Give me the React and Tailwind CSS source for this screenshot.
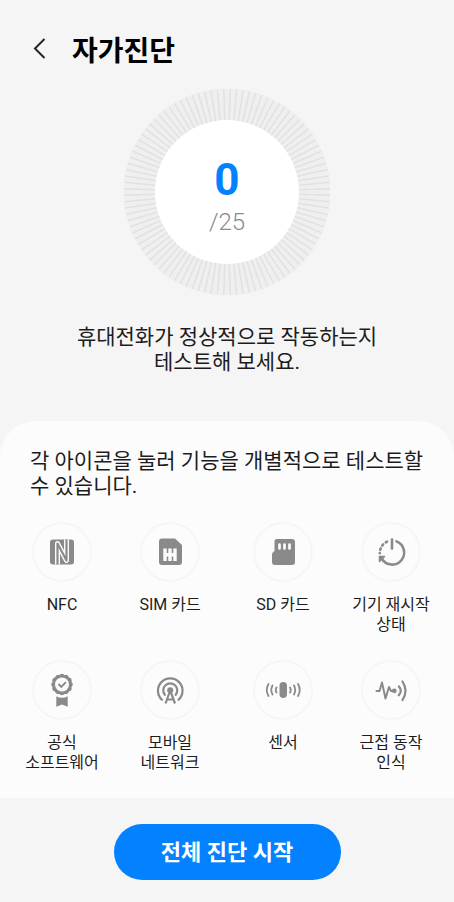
import React from 'react';

const TICK_COUNT = 100;
const SCALLOP_COUNT = 12;

const NfcIcon = () => (
  <svg viewBox="0 0 32 32" className="size-8" fill="none" strokeLinejoin="round" aria-hidden="true">
    <rect x="4" y="3.500" width="24" height="25" rx="3" fill="#8a8a8a" />
    <path d="M11.500 28.500V7.500L20.500 24.500V3.500" stroke="#fcfcfc" strokeWidth="5" />
    <path d="M11.500 28.500V7.500L20.500 24.500V3.500" stroke="#8a8a8a" strokeWidth="2.200" />
  </svg>
);

const SimIcon = () => (
  <svg viewBox="0 0 32 32" className="size-8" aria-hidden="true">
    <path d="M8 2.500H21L28 9V26a3 3 0 0 1-3 3H8a3 3 0 0 1-3-3V5.500A3 3 0 0 1 8 2.500z" fill="#8a8a8a" />
    <path d="M11 12.500v12.500M16 12.500v12.500M21 12.500v12.500M11 18.800h10" stroke="#fcfcfc" strokeWidth="3.400" fill="none" />
  </svg>
);

const SdIcon = () => (
  <svg viewBox="0 0 32 32" className="size-8" aria-hidden="true">
    <path d="M10 3H25a3 3 0 0 1 3 3V26a3 3 0 0 1-3 3H8a3 3 0 0 1-3-3V18.500a3 3 0 0 1 1-2.200l1.500-1.300V5.500A2.500 2.500 0 0 1 10 3z" fill="#8a8a8a" />
    <path d="M12.500 8.500v4M17.500 8.500v4M22.500 8.500v4" stroke="#fcfcfc" strokeWidth="2.700" strokeLinecap="round" />
  </svg>
);

const RestartIcon = () => (
  <svg viewBox="0 0 32 32" className="size-8" fill="none" stroke="#8a8a8a" strokeWidth="2.600" strokeLinecap="round" strokeLinejoin="round" aria-hidden="true">
    <path d="M17 3.500V12.500" />
    <path d="M21.500 5.400A12 12 0 1 1 7 23" />
    <path d="M12 5.600L10.800 6.300M8.100 8.500L7.200 9.600M5.700 12.400L5.200 13.800M4.800 17V17.200" />
    <path d="M4.500 20.500H9.500L4.500 25.500z" fill="#8a8a8a" strokeWidth="1.500" />
  </svg>
);

const SoftwareIcon = () => (
  <svg viewBox="0 0 32 36" className="h-9 w-8" fill="#8a8a8a" aria-hidden="true">
    {Array.from({ length: SCALLOP_COUNT }, (_, i) => (
      <circle key={i} cx="16" cy="4" r="2.300" transform={`rotate(${i * (360 / SCALLOP_COUNT)} 16 12.500)`} />
    ))}
    <circle cx="16" cy="12.500" r="10" />
    <circle cx="16" cy="12.500" r="7" fill="#fcfcfc" />
    <path d="M12.500 12l2.800 2.800 4.600-4.600" fill="none" stroke="#8a8a8a" strokeWidth="1.900" />
    <path d="M10.300 24.300q2.800 2 5.700 1.200 2.900.8 5.700-1.200V34.800L16 32.500l-5.700 2.300z" />
  </svg>
);

const NetworkIcon = () => (
  <svg viewBox="0 0 32 32" className="size-8" fill="none" stroke="#8a8a8a" strokeWidth="2.200" aria-hidden="true">
    <path d="M8 25.800A12.300 12.300 0 1 1 24.500 25.800" strokeLinecap="round" />
    <path d="M10.800 20.800A7 7 0 1 1 21.700 20.800" strokeLinecap="round" />
    <circle cx="16.200" cy="16.200" r="3" fill="#8a8a8a" stroke="none" />
    <path d="M16.200 16.500L11.500 29.500M16.200 16.500L21 29.500M13.500 25.500h5.500" />
  </svg>
);

const SensorIcon = () => (
  <svg viewBox="0 0 36 32" className="h-8 w-9" fill="none" stroke="#8a8a8a" strokeWidth="1.800" strokeLinecap="round" aria-hidden="true">
    <rect x="14.500" y="8" width="7.500" height="16" rx="3.700" fill="#8a8a8a" stroke="none" />
    <path d="M11.500 13.500q-1.500 2.500 0 5M7.500 11.500q-2.500 4.500 0 9M3.500 10q-3.500 6 0 12" />
    <path d="M25 13.500q1.500 2.500 0 5M29 11.500q2.500 4.500 0 9M33 10q3.500 6 0 12" />
  </svg>
);

const MotionIcon = () => (
  <svg viewBox="0 0 32 32" className="size-8" fill="none" stroke="#8a8a8a" strokeWidth="2" strokeLinecap="round" strokeLinejoin="round" aria-hidden="true">
    <path d="M1.500 17h3L7 8.500l3.500 16L14 13l2 4h3" />
    <circle cx="19.300" cy="16.800" r="2.400" fill="#8a8a8a" stroke="none" />
    <path d="M23.800 12.300q4 4.500 0 9M27.500 7.500q6 9.300 0 18.500" strokeWidth="2.200" />
  </svg>
);

const tests = [
  { icon: NfcIcon, lines: ['NFC'] },
  { icon: SimIcon, lines: ['SIM 카드'] },
  { icon: SdIcon, lines: ['SD 카드'] },
  { icon: RestartIcon, lines: ['기기 재시작', '상태'] },
  { icon: SoftwareIcon, lines: ['공식', '소프트웨어'] },
  { icon: NetworkIcon, lines: ['모바일', '네트워크'] },
  { icon: SensorIcon, lines: ['센서'] },
  { icon: MotionIcon, lines: ['근접 동작', '인식'] },
];

const ProgressDial = ({ done, total }) => (
  <div className="mx-auto grid size-52 place-items-center">
    <svg viewBox="0 0 208 208" className="col-start-1 row-start-1 size-52" aria-hidden="true">
      <circle cx="104" cy="104" r="103.500" fill="#efefef" />
      {Array.from({ length: TICK_COUNT }, (_, i) => (
        <path
          key={i}
          d="M104 1V34"
          stroke="#e1e1e1"
          strokeWidth="1.500"
          transform={`rotate(${(i + 0.5) * (360 / TICK_COUNT)} 104 104)`}
        />
      ))}
      <circle cx="104" cy="104" r="72" fill="#ffffff" />
    </svg>
    <div className="col-start-1 row-start-1 flex flex-col items-center pt-2">
      <span className="text-[44px] leading-[48px] font-bold text-[#0381fe]">{done}</span>
      <span className="mt-1 text-2xl leading-7 font-light text-[#8a8a8a]">/{total}</span>
    </div>
  </div>
);

const TestButton = ({ icon: Icon, lines }) => (
  <button type="button" className="flex flex-col items-center">
    <span className="flex size-[60px] items-center justify-center rounded-full border-2 border-[#f6f6f6]">
      <Icon />
    </span>
    <span className="mt-[13px] text-base leading-5 whitespace-nowrap">
      {lines.map((line) => (
        <span key={line} className="block">{line}</span>
      ))}
    </span>
  </button>
);

const App = () => {
  return (
    <div className="flex min-h-screen flex-col bg-[#f5f5f5] font-[Roboto,'Noto_Sans_CJK_KR',sans-serif] text-[#1c1c1c]">
      <header className="flex items-start gap-6 px-8 pt-7">
        <button type="button" aria-label="뒤로" className="flex h-10 w-4 items-center">
          <svg viewBox="0 0 16 24" className="h-6 w-4" fill="none" stroke="#252525" strokeWidth="2" aria-hidden="true">
            <path d="M12.500 3L3 12.500L12.500 22" />
          </svg>
        </button>
        <h1 className="pt-1 text-[28px] leading-10 font-bold text-black">자가진단</h1>
      </header>

      <main className="flex flex-1 flex-col">
        <div className="pt-4">
          <ProgressDial done={0} total={25} />
        </div>
        <p className="mt-[29px] text-center text-[21px] leading-[25px]">
          휴대전화가 정상적으로 작동하는지
          <br />
          테스트해 보세요.
        </p>

        <section className="mt-[46px] rounded-t-[36px] bg-[#fcfcfc] pt-7 pb-[25px]">
          <p className="px-[30px] text-[21px] leading-[25px] break-keep">
            각 아이콘을 눌러 기능을 개별적으로 테스트할 수 있습니다.
          </p>
          <div className="mt-[23px] grid grid-cols-[108fr_108fr_118fr_98fr] items-start gap-y-[25px] pr-3.5 pl-2">
            {tests.map((test) => (
              <TestButton key={test.lines[0]} {...test} />
            ))}
          </div>
        </section>

        <div className="flex justify-center py-[26px]">
          <button type="button" className="h-14 w-1/2 rounded-full bg-[#0381fe] text-[22px] font-bold text-white">
            전체 진단 시작
          </button>
        </div>
      </main>
    </div>
  );
};

export default App;
